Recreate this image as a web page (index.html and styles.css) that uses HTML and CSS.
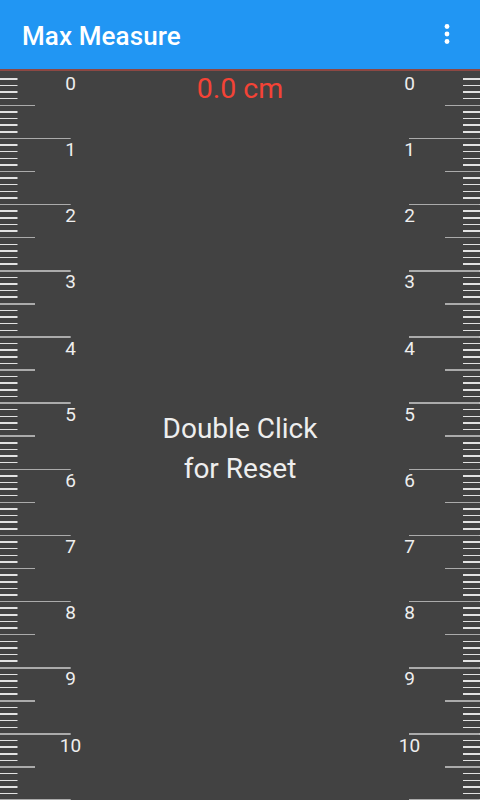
FILE: index.html
```html
<!DOCTYPE html>
<html lang="en">
<head>
<meta charset="utf-8">
<title>Max Measure</title>
<link rel="stylesheet" href="styles.css">
</head>
<body>
<header class="appbar">
  <h1 class="title">Max Measure</h1>
  <svg class="menu" width="10" height="24" viewBox="0 0 10 24" aria-label="More options">
    <circle cx="5" cy="4.5" r="2.4" fill="#fff"/>
    <circle cx="5" cy="12" r="2.4" fill="#fff"/>
    <circle cx="5" cy="19.5" r="2.4" fill="#fff"/>
  </svg>
</header>
<main class="ruler-area">
  <div class="ruler ruler-left">
    <div class="labels">
      <span class="mark">0</span><span class="mark">1</span><span class="mark">2</span><span class="mark">3</span><span class="mark">4</span><span class="mark">5</span><span class="mark">6</span><span class="mark">7</span><span class="mark">8</span><span class="mark">9</span><span class="mark">10</span>
    </div>
  </div>
  <div class="center">
    <div class="reading">0.0 cm</div>
    <div class="hint">Double Click<br>for Reset</div>
  </div>
  <div class="ruler ruler-right">
    <div class="labels">
      <span class="mark">0</span><span class="mark">1</span><span class="mark">2</span><span class="mark">3</span><span class="mark">4</span><span class="mark">5</span><span class="mark">6</span><span class="mark">7</span><span class="mark">8</span><span class="mark">9</span><span class="mark">10</span>
    </div>
  </div>
</main>
</body>
</html>
```

FILE: styles.css
```css
html, body {
  margin: 0;
  padding: 0;
}
body {
  width: 480px;
  height: 800px;
  overflow: hidden;
  background: #424242;
  font-family: Roboto, "Noto Sans", "Liberation Sans", sans-serif;
}
.appbar {
  height: 69px;
  background: #2196f3;
  border-bottom: 2px solid #8d4843;
  display: flex;
  align-items: center;
  justify-content: space-between;
  padding: 0 28px 0 22px;
  box-sizing: content-box;
}
.title {
  margin: 0;
  margin-top: 3px;
  font-size: 26px;
  font-weight: 500;
  color: #ffffff;
  letter-spacing: 0.1px;
}
.menu {
  display: block;
  margin-top: -2px;
}
.ruler-area {
  display: grid;
  grid-template-columns: 91px 1fr 91px;
  grid-template-rows: 729px;
  height: 729px;
  overflow: hidden;
}
.ruler {
  overflow: hidden;
  background-image:
    repeating-linear-gradient(to bottom, transparent 0 64.67px, #ababab 64.67px 66.17px),
    repeating-linear-gradient(to bottom, transparent 0 31.585px, #ababab 31.585px 33.085px, transparent 33.085px 66.17px),
    repeating-linear-gradient(to bottom, transparent 0 5.117px, #e2e2e2 5.117px 6.617px);
  background-size: 70.7px 100%, 35px 100%, 17.5px 100%;
  background-repeat: no-repeat;
}
.ruler-left {
  background-position: 0 1.5px, 0 1.5px, 0 1.5px;
}
.ruler-right {
  background-position: right 0 top 1.5px, right 0 top 1.5px, right 0 top 1.5px;
}
.labels {
  display: flex;
  flex-direction: column;
  width: 41px;
}
.ruler-left .labels {
  margin-left: 50px;
}
.mark {
  display: block;
  flex: 0 0 66.17px;
  box-sizing: border-box;
  padding-top: 2px;
  text-align: center;
  font-size: 19px;
  line-height: 22px;
  color: #eeeeee;
}
.center {
  display: flex;
  flex-direction: column;
  align-items: center;
  min-height: 0;
}
.reading {
  padding-top: 1px;
  font-size: 28.5px;
  line-height: 34px;
  color: #f44336;
}
.hint {
  flex: 1;
  display: flex;
  align-items: center;
  justify-content: center;
  text-align: center;
  font-size: 28px;
  line-height: 40px;
  color: #eeeeee;
  padding-bottom: 8px;
}
```
